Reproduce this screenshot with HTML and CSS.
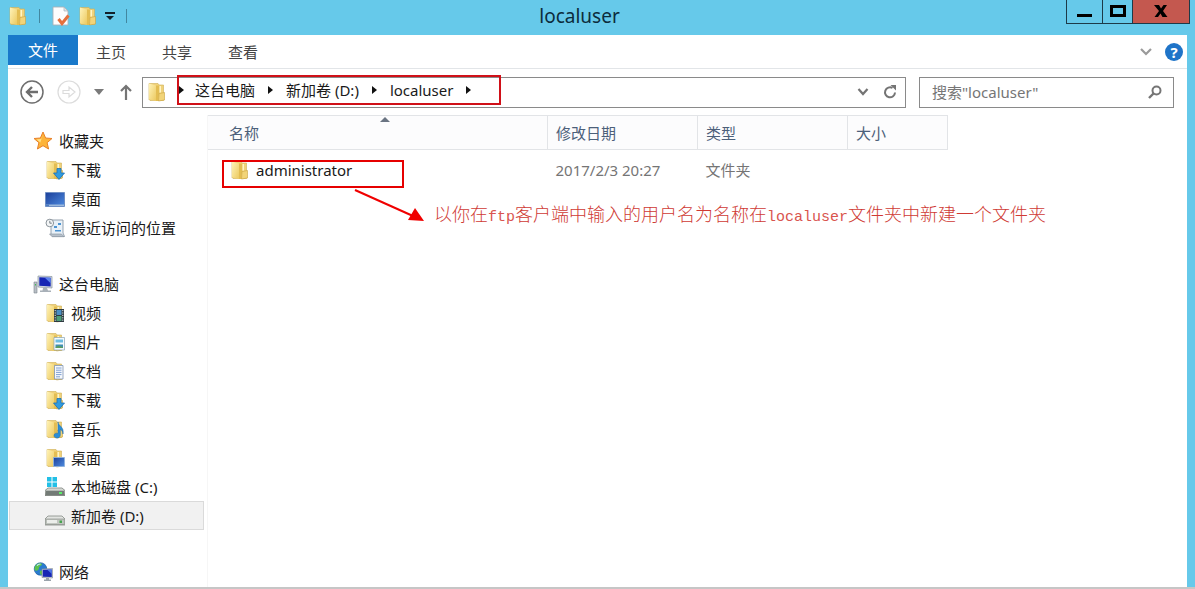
FILE: index.html
```html
<!DOCTYPE html>
<html lang="zh-CN">
<head>
  <meta charset="utf-8">
  <title>localuser</title>
  <link rel="stylesheet" href="styles.css">
</head>
<body>

<!-- shared icons -->
<svg class="sprite" aria-hidden="true">
  <defs>
    <linearGradient id="g-folder" x1="0" y1="0" x2="1" y2="1">
      <stop offset="0" stop-color="#fff3b8"/>
      <stop offset="1" stop-color="#ecc95f"/>
    </linearGradient>
    <linearGradient id="g-screen" x1="0" y1="0" x2="1" y2="1">
      <stop offset="0" stop-color="#1b3f9a"/>
      <stop offset="1" stop-color="#4f8ce0"/>
    </linearGradient>
    <linearGradient id="g-drive" x1="0" y1="0" x2="0" y2="1">
      <stop offset="0" stop-color="#e4e6e2"/>
      <stop offset="1" stop-color="#8c938c"/>
    </linearGradient>
    <symbol id="i-folder" viewBox="0 0 20 20">
      <path d="M2 1.500h9l1 1.500h4.500v15.500H3l-1-1z" fill="#f0d27a" stroke="#cfae55" stroke-width=".6"/>
      <path d="M2 1.500l7 2v15.500l-7-2z" fill="url(#g-folder)"/>
      <path d="M9 3.500h3V11l-1 8H9z" fill="#e3bd52"/>
      <path d="M12 11.500l5.500-1V18l-6 1z" fill="#f2d478" stroke="#c9a240" stroke-width=".6"/>
      <path d="M13.300 4v6.500" stroke="#fff4c4" stroke-width="1.400"/>
    </symbol>
    <symbol id="i-star" viewBox="0 0 20 20">
      <path d="M10 1l2.600 6 6.400.5-4.900 4.200L15.600 18 10 14.700 4.400 18l1.500-6.300L1 7.500 7.400 7z" fill="#fdb43a" stroke="#e8812a" stroke-width="1"/>
      <path d="M10 3.500L8.200 8l-4.500.4 3.600 3z" fill="#ffe28a"/>
    </symbol>
    <symbol id="i-download" viewBox="0 0 20 20">
      <use href="#i-folder"/>
      <path d="M12 8.500h4V13h3.500L14 19.500 8.500 13H12z" fill="#2f9be0" stroke="#1c6fb2" stroke-width=".8"/>
    </symbol>
    <symbol id="i-desktop" viewBox="0 0 20 20">
      <path d="M.5 3.500h19v14H.5z" fill="url(#g-screen)" stroke="#6f8fc4"/>
      <path d="M1 15.500h18v1.500H1z" fill="#9db9dc"/>
      <path d="M1 15.500h3v1.500H1z" fill="#4c7cc0"/>
    </symbol>
    <symbol id="i-recent" viewBox="0 0 20 20">
      <path d="M6 2h12v13l1.500 3.500h-12L6 16z" fill="#e9f1f8" stroke="#8b98a6" stroke-width=".9"/>
      <path d="M4.500 16h12l2.500 2.700H7z" fill="#b7c0ca" stroke="#85909c" stroke-width=".6"/>
      <path d="M9 8h3v2H9zM13 5h3v2h-3zM10 12h6v1.500h-6z" fill="#4e95d2"/>
      <circle cx="4.800" cy="5" r="3.800" fill="#f4f6f7" stroke="#8b949b"/>
      <path d="M4.800 2.800V5.200h2" fill="none" stroke="#59656f" stroke-width=".8"/>
    </symbol>
    <symbol id="i-pc" viewBox="0 0 20 20">
      <path d="M1 8h3v11H1z" fill="#b8bec5" stroke="#7e868e" stroke-width=".6"/>
      <path d="M2 10h1v1.500H2z" fill="#3fbf5a"/>
      <path d="M5 2l14 .5V14L5 13z" fill="#d4dbe2" stroke="#88939e" stroke-width=".7"/>
      <path d="M6.300 3.300l11.400.4v8.800L6.300 11.800z" fill="#1524b4"/>
      <path d="M11.500 3.500l6.200.2v5.600z" fill="#5a83ee"/>
      <path d="M10 14h4l1 2.500h3V18H7v-1.500h2.500z" fill="#a8b0b8"/>
    </symbol>
    <symbol id="i-video" viewBox="0 0 20 20">
      <use href="#i-folder"/>
      <path d="M9 6h10v13H9z" fill="#2e3a40"/>
      <path d="M11.500 7h5v5h-5z" fill="#4c8fc4"/>
      <path d="M11.500 13h5v5h-5z" fill="#4e9d78"/>
      <path d="M10.200 7v11M17.800 7v11" stroke="#e6ecef" stroke-width="1" stroke-dasharray="1.200 1.200"/>
    </symbol>
    <symbol id="i-picture" viewBox="0 0 20 20">
      <use href="#i-folder"/>
      <path d="M9 5.500h10.500V18H9z" fill="#f4fafd" stroke="#88a4b5" stroke-width=".7"/>
      <path d="M10.500 7.500H18v3h-7.500z" fill="#6cbde2"/>
      <path d="M10.500 12.500H18v3h-7.500z" fill="#3f8fb6"/>
      <path d="M10.500 15l3-1.500L18 15v1h-7.500z" fill="#5a9c63"/>
    </symbol>
    <symbol id="i-document" viewBox="0 0 20 20">
      <use href="#i-folder"/>
      <path d="M9.500 4.500H18V18H9.500z" fill="#f5f8fc" stroke="#8096b5" stroke-width=".8"/>
      <path d="M11 7h5.500M11 9.200h5.500M11 11.400h5.500M11 13.600h5.500M11 15.800h4" stroke="#7296cf" stroke-width=".9"/>
    </symbol>
    <symbol id="i-music" viewBox="0 0 20 20">
      <use href="#i-folder"/>
      <path d="M13 3c0 4 6.500 4.500 5 12-.3-3-1.500-4-2.700-4.500V16c0 4-6.300 4-6.300.6 0-2.300 2.300-2.800 4-2.200z" fill="#2b8ed6" stroke="#1d68a8" stroke-width=".5"/>
    </symbol>
    <symbol id="i-deskfolder" viewBox="0 0 20 20">
      <use href="#i-folder"/>
      <path d="M8.500 9.500h11v9h-11z" fill="url(#g-screen)" stroke="#8fb2de" stroke-width=".9"/>
    </symbol>
    <symbol id="i-disk-c" viewBox="0 0 20 20">
      <path d="M2 0h4.500v4.500H2zM7.500 0H12v4.500H7.500zM2 5.500h4.500V10H2zM7.500 5.500H12V10H7.500z" fill="#22bfe6"/>
      <path d="M3 11h14l3 2.500v5H0v-5z" fill="url(#g-drive)" stroke="#6b716c" stroke-width=".7"/>
      <path d="M1 13.800h18v4.200H1z" fill="#737b76"/>
      <path d="M14 15h3v2h-3z" fill="#5bf06a"/>
    </symbol>
    <symbol id="i-disk" viewBox="0 0 20 20">
      <path d="M3 10h14l3 3v6H0v-6z" fill="#e2e4e1" stroke="#858b85" stroke-width=".8"/>
      <path d="M.7 13h18.600v5.500H.7z" fill="#c2c7c1" stroke="#7f857f" stroke-width=".6"/>
      <path d="M2 14h10v3H2z" fill="#eceeeb"/>
      <path d="M14.500 14.500h2.500v2.500h-2.500z" fill="#45a44d"/>
    </symbol>
    <symbol id="i-network" viewBox="0 0 20 20">
      <circle cx="7.500" cy="7" r="6.300" fill="#2a7bd0" stroke="#1d5a9c" stroke-width=".6"/>
      <path d="M3 3c2-2 5-2 6-1 0 2-3 2-3 4s-2 3-4 2.500C1 6.500 1.500 4.500 3 3zM7 9c2-1 4 0 4 1.500L8.500 13c-1.500 0-2-2.500-1.500-4z" fill="#5cc24e"/>
      <path d="M4 3.500c1-1 2.500-1.500 3.500-1.500" stroke="#c7ecff" stroke-width="1.200" fill="none"/>
      <path d="M9 7l10.500-.5v9.500L9 15.500z" fill="#cbd3da" stroke="#7d8790" stroke-width=".6"/>
      <path d="M9.800 7.800l9-.4v7.700l-9-.4z" fill="#1727b4"/>
      <path d="M14 7.600l4.800-.2v4.600z" fill="#5078e6"/>
      <path d="M13 16h3v1.500h2V19h-7v-1.500h2z" fill="#9aa3ab"/>
    </symbol>
    <symbol id="i-props" viewBox="0 0 20 20">
      <path d="M2 1h11l4 4v14H2z" fill="#fdfdfd" stroke="#a9b1b8" stroke-width=".9"/>
      <path d="M13 1v4h4z" fill="#dfe5ea" stroke="#a9b1b8" stroke-width=".7"/>
      <path d="M7.500 13l3.500 4.500 6.500-8" fill="none" stroke="#e4703c" stroke-width="3"/>
    </symbol>
  </defs>
</svg>

<div class="window">

  <header class="titlebar">
    <div class="quick">
      <svg class="icon"><use href="#i-folder"/></svg>
      <span class="sep"></span>
      <button type="button" aria-label="属性"><svg class="icon"><use href="#i-props"/></svg></button>
      <button type="button" aria-label="新建文件夹"><svg class="icon"><use href="#i-folder"/></svg></button>
      <button type="button" aria-label="自定义快速访问工具栏"><svg width="10" height="10" viewBox="0 0 10 10"><path d="M0 1h10v2H0zM1 5h8L5 9z" fill="#12202a"/></svg></button>
      <span class="sep"></span>
    </div>
    <h1>localuser</h1>
    <div class="controls">
      <button type="button" class="min" aria-label="最小化"><svg width="16" height="14" viewBox="0 0 16 14"><path d="M0 10h15v3H0z"/></svg></button>
      <button type="button" class="max" aria-label="最大化"><svg width="16" height="14" viewBox="0 0 16 14"><path d="M0 1h16v12H0zM3 4v6h10V4z" fill-rule="evenodd"/></svg></button>
      <button type="button" class="close" aria-label="关闭"><svg width="14" height="14" viewBox="0 0 14 14"><path d="M0 1h5l2 3.500L9.500 1H13L9 7l4.500 6h-5L6.500 9.500 4 13H.5L5 7z"/></svg></button>
    </div>
  </header>

  <div class="client">

    <nav class="ribbon">
      <button type="button" class="tab file">文件</button>
      <button type="button" class="tab">主页</button>
      <button type="button" class="tab">共享</button>
      <button type="button" class="tab">查看</button>
      <div class="ribbon-right">
        <button type="button" aria-label="展开功能区"><svg width="12" height="8" viewBox="0 0 12 8"><path d="M1 1l5 5 5-5" fill="none" stroke="#9a9a9a" stroke-width="2.200"/></svg></button>
        <button type="button" class="help" aria-label="帮助">?</button>
      </div>
    </nav>

    <div class="navbar">
      <div class="history">
        <button type="button" aria-label="后退"><svg width="24" height="24" viewBox="0 0 24 24" fill="none" stroke="#6e6e6e"><circle cx="12" cy="12" r="11" stroke-width="1.500"/><path d="M18 12H7.500M12 7l-5 5 5 5" stroke-width="2.400"/></svg></button>
        <button type="button" aria-label="前进"><svg width="24" height="24" viewBox="0 0 24 24" fill="none" stroke="#dcdcdc"><circle cx="12" cy="12" r="11" stroke-width="1.200"/><path d="M6 10.500h6V7l6 5-6 5v-3.500H6z" stroke-width="1.200"/></svg></button>
        <button type="button" aria-label="最近浏览的位置"><svg width="10" height="6" viewBox="0 0 10 6"><path d="M0 0h10L5 6z" fill="#7a7a7a"/></svg></button>
        <button type="button" class="up" aria-label="上移"><svg width="12" height="16" viewBox="0 0 12 16"><path d="M6 16V2M1 7l5-5 5 5" fill="none" stroke="#757575" stroke-width="2.200"/></svg></button>
      </div>

      <div class="address">
        <svg class="icon"><use href="#i-folder"/></svg>
        <ol class="crumbs">
          <li><a href="#">这台电脑</a></li>
          <li><a href="#">新加卷 (D:)</a></li>
          <li><a href="#">localuser</a></li>
        </ol>
        <div class="address-tools">
          <button type="button" aria-label="以前的位置"><svg width="12" height="8" viewBox="0 0 12 8"><path d="M1.500 1L6 6l4.500-5" fill="none" stroke="#747474" stroke-width="2.200"/></svg></button>
          <button type="button" aria-label="刷新"><svg width="14" height="14" viewBox="0 0 14 14"><path d="M9.500 3A5 5 0 1 0 12 7.500" fill="none" stroke="#747474" stroke-width="2"/><path d="M7.500 0H13v5.500z" fill="#747474"/></svg></button>
        </div>
      </div>

      <label class="search">
        <input type="text" aria-label="搜索" placeholder="搜索&quot;localuser&quot;">
        <svg width="14" height="14" viewBox="0 0 14 14" fill="none" stroke="#757575"><circle cx="8.500" cy="5.500" r="4" stroke-width="2"/><path d="M5.500 8.500L1 13" stroke-width="2.400"/></svg>
      </label>
    </div>

    <div class="body">

      <aside class="tree">
        <ul>
          <li class="root"><a href="#"><svg class="icon"><use href="#i-star"/></svg>收藏夹</a></li>
          <li><a href="#"><svg class="icon"><use href="#i-download"/></svg>下载</a></li>
          <li><a href="#"><svg class="icon"><use href="#i-desktop"/></svg>桌面</a></li>
          <li><a href="#"><svg class="icon"><use href="#i-recent"/></svg>最近访问的位置</a></li>
        </ul>
        <ul>
          <li class="root"><a href="#"><svg class="icon"><use href="#i-pc"/></svg>这台电脑</a></li>
          <li><a href="#"><svg class="icon"><use href="#i-video"/></svg>视频</a></li>
          <li><a href="#"><svg class="icon"><use href="#i-picture"/></svg>图片</a></li>
          <li><a href="#"><svg class="icon"><use href="#i-document"/></svg>文档</a></li>
          <li><a href="#"><svg class="icon"><use href="#i-download"/></svg>下载</a></li>
          <li><a href="#"><svg class="icon"><use href="#i-music"/></svg>音乐</a></li>
          <li><a href="#"><svg class="icon"><use href="#i-deskfolder"/></svg>桌面</a></li>
          <li><a href="#"><svg class="icon"><use href="#i-disk-c"/></svg>本地磁盘 (C:)</a></li>
          <li class="selected"><a href="#"><svg class="icon"><use href="#i-disk"/></svg>新加卷 (D:)</a></li>
        </ul>
        <ul>
          <li class="root"><a href="#"><svg class="icon"><use href="#i-network"/></svg>网络</a></li>
        </ul>
      </aside>

      <main class="files">
        <table>
          <thead>
            <tr>
              <th class="col-name">名称<span class="sort"></span></th>
              <th class="col-date">修改日期</th>
              <th class="col-type">类型</th>
              <th class="col-size">大小</th>
            </tr>
          </thead>
          <tbody>
            <tr>
              <td><a class="entry" href="#"><svg class="icon"><use href="#i-folder"/></svg>administrator</a></td>
              <td>2017/2/3 20:27</td>
              <td>文件夹</td>
              <td></td>
            </tr>
          </tbody>
        </table>

        <!-- callout over the list -->
        <div class="mark"></div>
        <svg class="arrow" width="72" height="36" viewBox="0 0 72 36"><path d="M1 2l58 26" stroke="#f00000" stroke-width="2"/><path d="M61 20l9 13-16-1z" fill="#f00000"/></svg>
        <p class="note">以你在<span>ftp</span>客户端中输入的用户名为名称在<span>localuser</span>文件夹中新建一个文件夹</p>
      </main>

    </div>
  </div>
</div>

</body>
</html>
```

FILE: styles.css
```css
* { box-sizing: border-box; }

html, body { height: 100%; }

body {
  margin: 0;
  background: #66c9ea;
  color: #1a1a1a;
  font: 15px/20px "Noto Sans", "Noto Sans CJK SC", sans-serif;
}

button {
  display: flex;
  align-items: center;
  justify-content: center;
  margin: 0;
  padding: 0;
  border: 0;
  background: none;
  color: inherit;
  font: inherit;
}

a { color: inherit; text-decoration: none; }
ul, ol { margin: 0; padding: 0; list-style: none; }

.sprite { position: absolute; width: 0; height: 0; }
.icon { width: 20px; height: 20px; flex: none; }

.window {
  display: flex;
  flex-direction: column;
  min-height: 100%;
  border-bottom: 2px solid #c6c6c6;
}

/* title bar */
.titlebar {
  display: flex;
  align-items: flex-start;
  height: 35px;
  padding: 0 5px 0 8px;
}
.quick {
  display: flex;
  align-items: center;
  gap: 7px;
  height: 32px;
}
.quick .sep { width: 1px; height: 14px; margin: 0 4px; background: #4287a0; }
.titlebar h1 {
  flex: 1;
  margin: 0;
  padding-right: 38px;
  color: #0c2c3c;
  font-size: 19px;
  font-weight: 400;
  line-height: 32px;
  text-align: center;
}
.controls { display: flex; border: 1px solid #1d3a48; border-top: 0; }
.controls button { height: 23px; padding-bottom: 2px; }
.controls .min { width: 35px; }
.controls .max { width: 31px; border: solid #1d3a48; border-width: 0 1px; }
.controls .close { width: 56px; background: #c4584f; }

.client {
  display: flex;
  flex: 1;
  flex-direction: column;
  margin: 0 8px;
  background: #fff;
}

/* ribbon */
.ribbon {
  display: flex;
  align-items: flex-start;
  height: 34px;
  border-bottom: 1px solid #e2e5e8;
}
.tab { width: 66px; height: 34px; color: #444; }
.tab.file { width: 70px; height: 30px; background: #1979ca; color: #fff; }
.ribbon-right {
  display: flex;
  align-items: center;
  gap: 13px;
  height: 34px;
  margin-left: auto;
  padding-right: 4px;
}
.help {
  width: 18px;
  height: 18px;
  border-radius: 50%;
  background: #1f74c8;
  color: #fff;
  font-weight: 700;
}

/* address row */
.navbar {
  display: flex;
  align-items: center;
  height: 46px;
  padding: 0 13px 0 12px;
}
.history {
  display: flex;
  align-items: center;
  gap: 13px;
  margin-right: 7px;
}
.up { width: 18px; }
.address {
  display: flex;
  flex: 1;
  align-items: center;
  height: 31px;
  padding-left: 4px;
  border: 1px solid #8a8a8a;
}
.crumbs {
  display: flex;
  width: 324px;
  height: 30px;
  margin: -4px 0 0 10px;
  border: 2px solid #d01018;
}
.crumbs li { display: flex; align-items: center; }
.crumbs li::before,
.crumbs li:last-child::after {
  content: "";
  width: 0;
  margin: 0 13px;
  border: solid transparent;
  border-width: 4px 0 4px 5px;
  border-left-color: #111;
}
.crumbs li:first-child::before { margin: 0 11px 0 0; }
.address-tools { display: flex; gap: 14px; margin-left: auto; padding-right: 8px; }

.search {
  display: flex;
  flex: 0 1 255px;
  align-items: center;
  min-width: 0;
  height: 31px;
  margin-left: 13px;
  padding: 0 11px 0 12px;
  border: 1px solid #8a8a8a;
}
.search input {
  flex: 1;
  min-width: 0;
  padding: 0;
  border: 0;
  outline: 0;
  background: none;
  font: inherit;
}
.search input::placeholder { color: #767676; opacity: 1; }

.body { display: flex; flex: 1; }

/* navigation tree */
.tree { width: 200px; padding: 12px 3px 0 1px; border-right: 1px solid #f6f6f6; }
.tree ul + ul { margin-top: 28px; }
.tree li a {
  display: flex;
  align-items: center;
  gap: 6px;
  height: 29px;
  padding-left: 36px;
}
.tree .root a { height: 28px; padding-left: 24px; }
.tree .selected { background: #f1f1f1; box-shadow: inset 0 0 0 1px #dadada; }

/* file list */
.files { position: relative; flex: 1; }
.files table { width: 740px; border-collapse: collapse; table-layout: fixed; }
.files th {
  position: relative;
  height: 34px;
  padding: 0 8px;
  border: 1px solid #e2e4e7;
  background: #fcfcfd;
  color: #4c607a;
  font-weight: 400;
  text-align: left;
}
.files .col-name { padding-left: 21px; border-left: 0; }
.col-date, .col-type { width: 150px; }
.col-size { width: 100px; }
.sort {
  position: absolute;
  top: 1px;
  left: 172px;
  border: solid transparent;
  border-width: 0 5px 5px;
  border-bottom-color: #6a7482;
}
.files td { height: 40px; padding: 0 8px; color: #757575; }
.entry { display: flex; align-items: center; gap: 6px; padding-left: 14px; color: #1a1a1a; }

.mark {
  position: absolute;
  top: 45px;
  left: 14px;
  width: 182px;
  height: 28px;
  border: 2px solid #e60000;
}
.arrow { position: absolute; top: 73px; left: 146px; }
.note {
  position: absolute;
  top: 86px;
  left: 226px;
  margin: 0;
  color: #cf3a34;
  font: 300 18px/24px "Noto Sans CJK SC", sans-serif;
  white-space: nowrap;
}
.note span { color: #d9544e; font-family: "Liberation Mono", monospace; font-size: 15px; }
```
